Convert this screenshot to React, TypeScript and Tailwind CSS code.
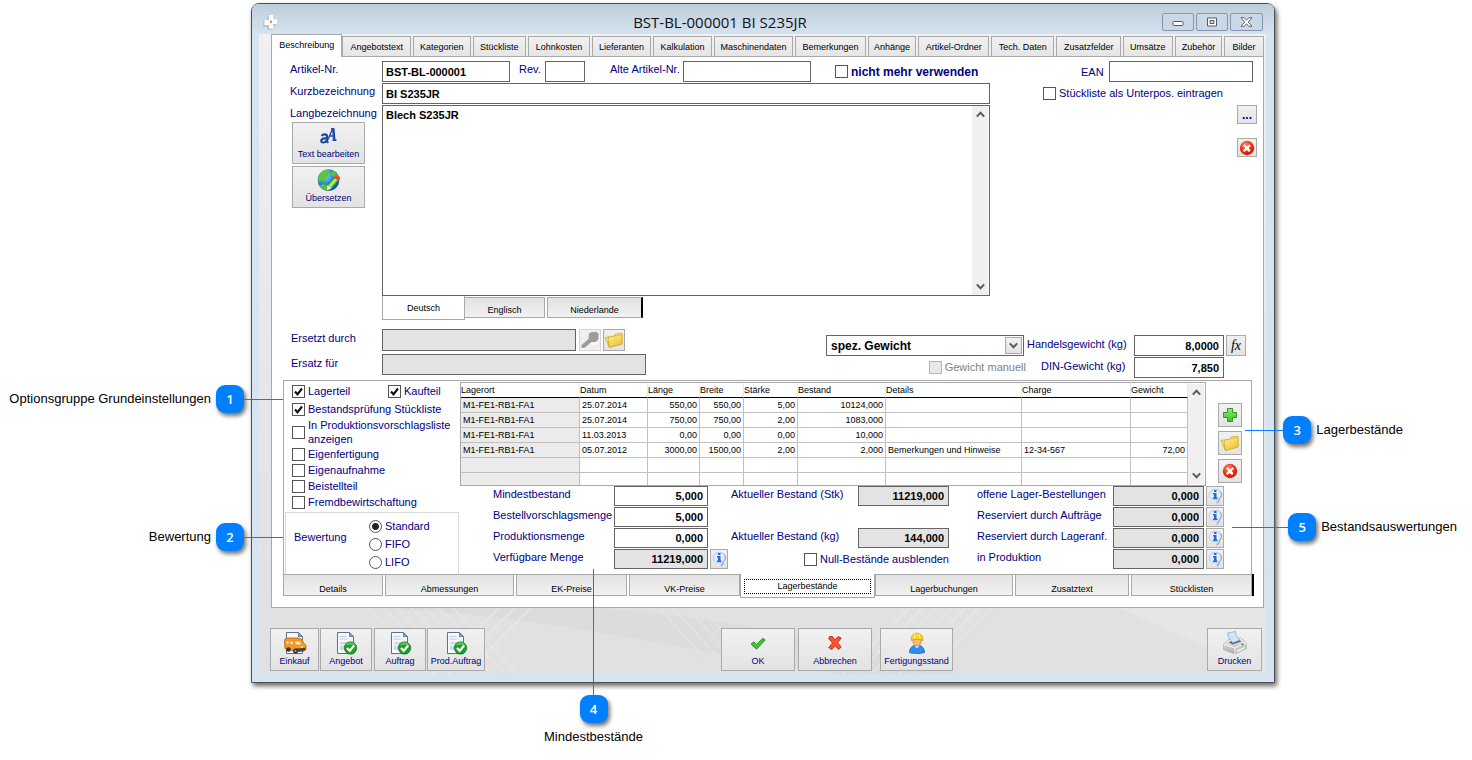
import type { ReactNode } from 'react';
import clsx from 'clsx';

const mainTabs = [
  { label: 'Beschreibung', width: 'w-[72px]' },
  { label: 'Angebotstext', width: 'w-[69px]' },
  { label: 'Kategorien', width: 'w-[58px]' },
  { label: 'Stückliste', width: 'w-[54px]' },
  { label: 'Lohnkosten', width: 'w-[62px]' },
  { label: 'Lieferanten', width: 'w-[60px]' },
  { label: 'Kalkulation', width: 'w-[59px]' },
  { label: 'Maschinendaten', width: 'w-[80px]' },
  { label: 'Bemerkungen', width: 'w-[71px]' },
  { label: 'Anhänge', width: 'w-[49px]' },
  { label: 'Artikel-Ordner', width: 'w-[71px]' },
  { label: 'Tech. Daten', width: 'w-[64px]' },
  { label: 'Zusatzfelder', width: 'w-[65px]' },
  { label: 'Umsätze', width: 'w-[50px]' },
  { label: 'Zubehör', width: 'w-[48px]' },
  { label: 'Bilder', width: 'w-[40px]' },
];

const detailTabs = [
  { label: 'Details', width: 'w-[100px]' },
  { label: 'Abmessungen', width: 'w-[129px]' },
  { label: 'EK-Preise', width: 'w-[111px]' },
  { label: 'VK-Preise', width: 'w-[111px]' },
  { label: 'Lagerbestände', width: 'w-[135px]' },
  { label: 'Lagerbuchungen', width: 'w-[138px]' },
  { label: 'Zusatztext', width: 'w-[114px]' },
  { label: 'Stücklisten', width: 'w-[121px]' },
];

const columns = [
  { label: 'Lagerort', width: 'w-[119px]' },
  { label: 'Datum', width: 'w-[68px]' },
  { label: 'Länge', width: 'w-[52px]', right: true },
  { label: 'Breite', width: 'w-[44px]', right: true },
  { label: 'Stärke', width: 'w-[54px]', right: true },
  { label: 'Bestand', width: 'w-[88px]', right: true },
  { label: 'Details', width: 'w-[136px]' },
  { label: 'Charge', width: 'w-[109px]' },
  { label: 'Gewicht', width: 'w-[57px]', right: true },
];

const stock = [
  ['M1-FE1-RB1-FA1', '25.07.2014', '550,00', '550,00', '5,00', '10124,000', '', '', ''],
  ['M1-FE1-RB1-FA1', '25.07.2014', '750,00', '750,00', '2,00', '1083,000', '', '', ''],
  ['M1-FE1-RB1-FA1', '11.03.2013', '0,00', '0,00', '0,00', '10,000', '', '', ''],
  ['M1-FE1-RB1-FA1', '05.07.2012', '3000,00', '1500,00', '2,00', '2,000', 'Bemerkungen und Hinweise', '12-34-567', '72,00'],
  ['', '', '', '', '', '', '', '', ''],
  ['', '', '', '', '', '', '', '', ''],
];

/* ---------- Icons ---------- */

const Chevron = ({ up = false }: { up?: boolean }) => (
  <svg width="9" height="7" viewBox="0 0 9 7" fill="none" stroke="#5a5a5a" strokeWidth="2">
    <path d={up ? 'M0.8 5.6 4.5 1.8 8.2 5.6' : 'M0.8 1.4 4.5 5.2 8.2 1.4'} />
  </svg>
);

const AppIcon = () => (
  <svg width="15" height="16" viewBox="0 0 15 16">
    <path d="M4 3h5v4h4v5H9v4H4v-3H0V7h4z" fill="#aebccb" opacity=".7" />
    <path d="M6 1h4v4.500h4V10h-4v4.500H6V11H1.500V6H6z" fill="#fff" />
    <circle cx="8" cy="7.800" r="1.200" fill="#f08030" />
  </svg>
);

const DeleteIcon = () => (
  <svg width="16" height="16" viewBox="0 0 16 16">
    <defs>
      <radialGradient id="delRed" cx=".4" cy=".3" r=".8">
        <stop offset="0" stopColor="#ff8a6c" />
        <stop offset=".5" stopColor="#ee3518" />
        <stop offset="1" stopColor="#b81400" />
      </radialGradient>
    </defs>
    <circle cx="8" cy="8" r="7.200" fill="url(#delRed)" />
    <path d="M5.300 4.200 8 6.400l2.700-2.200 1.200 1.500L9.700 8l1.800 2.500-1.500 1.400-2.400-2-2.300 2.200-1.400-1.500L6.300 8 4.200 5.600z" fill="#fff" />
  </svg>
);

const PlusIcon = () => (
  <svg width="16" height="16" viewBox="0 0 16 16">
    <defs>
      <linearGradient id="plusGreen" x2="0" y2="1">
        <stop offset="0" stopColor="#9be86f" />
        <stop offset="1" stopColor="#3cc02a" />
      </linearGradient>
    </defs>
    <path d="M5.500 1.500h5v4h4v5h-4v4h-5v-4h-4v-5h4z" fill="url(#plusGreen)" stroke="#2b9a22" />
  </svg>
);

const FolderIcon = () => (
  <svg width="20" height="18" viewBox="0 0 20 18">
    <defs>
      <linearGradient id="folderGold" x2=".6" y2="1">
        <stop offset="0" stopColor="#fff3a0" />
        <stop offset="1" stopColor="#f0c330" />
      </linearGradient>
    </defs>
    <path d="m1 6.500 3.500-.6 1 10.600z" fill="#ffe98a" stroke="#d2a520" strokeWidth=".8" />
    <path d="m4.500 6 6-1 .5-1.700 6.500-1.300.7.900V13L5.500 16.500 4 8.500z" fill="url(#folderGold)" stroke="#d0a11c" strokeWidth=".8" />
    <path d="m10.500 5 7-1.200" stroke="#d9b540" strokeWidth=".7" />
  </svg>
);

const InfoIcon = () => (
  <svg width="15" height="17" viewBox="0 0 15 17">
    <path d="M7.500 1.300c3.600 0 6.200 2.300 6.200 5.300 0 2-1 3.500-2.500 4.400.2 1.800-.3 3.300-2.400 4.600.5-1.300.4-2.400.1-3.700-4.500.6-7.600-2-7.600-5.300 0-3 2.600-5.300 6.200-5.300Z" fill="#e9ebfc" stroke="#bbbfe0" strokeWidth=".9" />
    <path d="M12 3.200c2.200 2.600 1.500 5.700-.9 7.600l-.1 1.700-1.500 2.300" fill="none" stroke="#8289c0" strokeWidth=".9" />
    <path d="M6 2h2.500v2H6zM5 5h3.500v4.500h1V11H5V9.500h1v-3H5z" fill="#1272d8" />
  </svg>
);

const KeyIcon = () => (
  <svg width="20" height="19" viewBox="0 0 20 19">
    <path d="m2.500 18.500 7-6.500 4 1.500L19 9V4" fill="none" stroke="#fff" strokeWidth="1.500" />
    <path d="M9 2.500 11.500 1h5L18.500 3v5.500L16 11h-4.500L4.500 17 2 17l-1-2.500 7.500-6.500z" fill="#9c9c9c" />
  </svg>
);

const FontIcon = () => (
  <svg width="17" height="18" viewBox="0 0 17 18" fill="none" stroke="#1c4aa6">
    <path d="M1.800 9c.8-2 5.200-2.300 5.200.6V14c0 1 .6 1.200 1.500 1M6.500 11.200C3 11.300 1 12 1.200 14c.3 2.300 4.300 1.800 5.300-.5" strokeWidth="2.200" />
    <path d="M8 12.500 12.500 2M11 1.700h3M9.500 9h5M12.500 13.300h4" strokeWidth="1.400" />
    <path d="m13.300 1.500 1 12" strokeWidth="2.600" />
  </svg>
);

const GlobeIcon = () => (
  <svg width="24" height="24" viewBox="0 0 24 24">
    <defs>
      <radialGradient id="sea" cx=".35" cy=".3" r=".8">
        <stop offset="0" stopColor="#8fd6ff" />
        <stop offset=".5" stopColor="#2682d8" />
        <stop offset="1" stopColor="#0c4596" />
      </radialGradient>
    </defs>
    <circle cx="11.500" cy="12" r="10.800" fill="url(#sea)" />
    <path d="M2.500 6.500C4.500 3.500 7.500 2 10.500 1.800l2.500 1.700-2 2.500 1 2-3 1.700-1.200 3.300-3.200-1L1.500 14C.9 11 1.300 8.500 2.500 6.500ZM15.500 2.500c3 1.300 5.300 4 6.300 7l-2 1.500-3.500-2-1.800-3zM5.500 16l4 1L11 20.500l-2 2C6 21.500 4 19.500 3 17.500z" fill="#5cc535" />
    <path d="m9.500 22.500.8-5.500L17.500 9l4.300 3L14.500 20.500z" fill="#5fcf3c" stroke="#237a18" strokeWidth=".8" />
    <path d="m12.800 18.500 6.700-8" stroke="#c8f5a5" strokeWidth="1.500" />
    <path d="m9.500 22.500.8-5.500 4.200 3.500z" fill="#e2f3ce" />
    <path d="m16.500 9.700 1.300-2c1.500-1.500 5.800.7 5.200 3l-1.500 2z" fill="#e84a32" />
  </svg>
);

const Page = () => (
  <>
    <path d="M3.500 1.500h12l4 4v17h-16z" fill="#f4f8fd" stroke="#5b7192" />
    <path d="M15.500 1.500v4h4z" fill="#7ba3d4" stroke="#5b7192" strokeWidth=".8" />
  </>
);

const DocumentOkIcon = () => (
  <svg width="24" height="24" viewBox="0 0 24 24">
    <Page />
    <path d="M5.500 5.500h7M5.500 8h8" stroke="#c3cbe0" strokeWidth="1.200" />
    <path d="M6 11h11v8H6z" fill="#cfd6e6" />
    <path d="M6 14h8" stroke="#fff" />
    <circle cx="16.500" cy="17" r="6.200" fill="#18a127" stroke="#0c7718" strokeWidth=".7" />
    <path d="M11.500 14.500a5.500 5.500 0 0 1 10 0c-3-1.200-7-1-10 0Z" fill="#76d66b" opacity=".7" />
    <path d="m13 17 2.700 2.800 4.500-5.300" fill="none" stroke="#fff" strokeWidth="2.300" />
  </svg>
);

const VanIcon = () => (
  <svg width="24" height="24" viewBox="0 0 24 24">
    <Page />
    <path d="M1.500 9C2 7.500 3.500 7 5.500 7H14c4 0 5.500 1.500 6.500 5l2.500 2.200v4.300l-2 1.500-8 .5L2 17.500z" fill="#f89a1c" stroke="#bd5c06" strokeWidth=".8" />
    <path d="M3 10h3v3.300l-3-.3zM7 10h3.200v3.700L7 13.400zM11.500 10h4.300c1.500.4 2.400 1.800 2.900 3.800l-6.200.3z" fill="#fce5b4" stroke="#c87a1e" strokeWidth=".5" />
    <path d="m13 17.500 9.500-.8v2l-2 1.500-7.500.6z" fill="#4c4640" />
    <circle cx="5.500" cy="18.500" r="2.300" fill="#333" />
    <circle cx="12.500" cy="20" r="2.500" fill="#333" />
    <circle cx="12.500" cy="20" r="1" fill="#aaa" />
    <circle cx="19" cy="16" r="1" fill="#fff4bd" />
  </svg>
);

const CheckIcon = () => (
  <svg width="16" height="16" viewBox="0 0 16 16">
    <path d="M1 9.200 3.600 6.800l2.800 2.600 6.400-6.200 2.400 1.800-8.600 9.200z" fill="#3fc631" stroke="#258d1d" strokeWidth=".9" />
  </svg>
);

const CrossIcon = () => (
  <svg width="16" height="16" viewBox="0 0 16 16">
    <path d="M2.500 1.500h3L8 4.800l3.200-3.300 3 1.500-3.500 4.700 3.500 4.500-2.700 2.300L8 10.800l-3 3.700-3.300-1.800L5.500 8 1.700 3.700z" fill="#fa5330" stroke="#c22a12" strokeWidth=".9" />
  </svg>
);

const WorkerIcon = () => (
  <svg width="18" height="22" viewBox="0 0 18 22">
    <path d="M1.500 20.500c0-4 2-6.500 5-7h5c3 .5 5 3 5 7-3 1.300-12 1.300-15 0Z" fill="#318de8" stroke="#1261b5" strokeWidth=".7" />
    <path d="m6.300 13.500 2.700 3 2.700-3z" fill="#d9efff" />
    <ellipse cx="9" cy="9" rx="4.200" ry="5" fill="#f5b878" stroke="#b97938" strokeWidth=".6" />
    <path d="M3.200 8.500C3 4 5 1.200 9 1.200S15.200 4 15 8.500C11.500 6.800 7 6.800 3.200 8.500Z" fill="#ffd428" stroke="#c79405" strokeWidth=".7" />
    <path d="M7 1.800c-.6 1.500-.7 3.200-.5 5M11 1.800c.5 1.500.6 3.200.5 5" fill="none" stroke="#fff09a" strokeWidth=".9" />
  </svg>
);

const PrinterIcon = () => (
  <svg width="26" height="26" viewBox="0 0 26 26">
    <defs>
      <linearGradient id="printerBody" x2="0" y2="1">
        <stop offset="0" stopColor="#f5f5f5" />
        <stop offset="1" stopColor="#a8a8a8" />
      </linearGradient>
    </defs>
    <path d="m1.500 14 5-4.500 12-1.500 6 4.500v6L13 24 1.500 19.500z" fill="url(#printerBody)" stroke="#a5a5a5" strokeWidth=".6" />
    <path d="M1.500 14 13 18l11.500-5.500M13 18v6" fill="none" stroke="#fff" strokeWidth=".9" />
    <path d="m6.500 12 10.500-2.500 2.500 2-9 3z" fill="#666" />
    <path d="m5.500 3 8-1.500c-.2 3 1.500 6.500 4.500 8.500l-7 2.700C8.200 10.500 6 7 5.500 3Z" fill="#cde6fb" stroke="#7aa7d0" strokeWidth=".7" />
    <path d="m14 20 8-3.500 2.500 1.500-9.500 5z" fill="#eee" stroke="#aaa" strokeWidth=".5" />
    <circle cx="20.500" cy="14.500" r="1.300" fill="#35c928" />
  </svg>
);

/* ---------- Controls ---------- */

const buttonLook = 'border border-[#a9a9a9] bg-linear-to-b from-[#f1f1f1] to-[#e3e3e3]';

const IconButton = ({ label, size, disabled, children }: { label: string; size: string; disabled?: boolean; children: ReactNode }) => (
  <button
    type="button"
    aria-label={label}
    disabled={disabled}
    className={clsx('flex shrink-0 items-center justify-center', size, disabled ? 'border border-[#d4d4d4] bg-[#efefef]' : buttonLook)}
  >
    {children}
  </button>
);

const ToolButton = ({ label, size, icon }: { label: string; size: string; icon: ReactNode }) => (
  <button type="button" className={clsx('flex shrink-0 flex-col items-center justify-end whitespace-nowrap text-[9px] leading-[11px] text-[#000080]', size, buttonLook)}>
    <span className="flex h-6 items-center">{icon}</span>
    <span className="mt-px mb-[3px]">{label}</span>
  </button>
);

const TextField = ({ id, label, value = '', className, readOnly }: { id?: string; label?: string; value?: string; className: string; readOnly?: boolean }) => (
  <input
    id={id}
    aria-label={label}
    type="text"
    defaultValue={value}
    readOnly={readOnly}
    className={clsx('shrink-0 border border-[#646464] pr-1 pl-[3px] text-[11px] font-bold text-black outline-none', readOnly ? 'bg-[#e3e3e3]' : 'bg-white', className)}
  />
);

const Check = ({ label, checked, disabled, className, bold }: { label: string; checked?: boolean; disabled?: boolean; className?: string; bold?: boolean }) => (
  <label className={clsx('flex items-center gap-[3px]', bold ? 'text-[12px] font-bold' : 'text-[11px]', disabled ? 'text-[#808080]' : 'text-[#000080]', className)}>
    <span className="relative size-[13px] shrink-0">
      <input
        type="checkbox"
        defaultChecked={checked}
        disabled={disabled}
        className={clsx('peer block size-[13px] appearance-none border', disabled ? 'border-[#b5b5b5] bg-[#e8e8e8]' : 'border-[#555] bg-white')}
      />
      <svg className="pointer-events-none absolute inset-0 hidden peer-checked:block" width="13" height="13" viewBox="0 0 13 13">
        <path d="m3 6.500 2.500 2.800L10 3.500" fill="none" stroke="#111" strokeWidth="2.200" />
      </svg>
    </span>
    <span>{label}</span>
  </label>
);

const Radio = ({ label, checked }: { label: string; checked?: boolean }) => (
  <label className="flex h-[18px] items-center gap-[3px] text-[11px] text-[#000080]">
    <input
      type="radio"
      name="bewertung"
      defaultChecked={checked}
      className="size-[13px] appearance-none rounded-full border border-[#555] bg-white checked:bg-[radial-gradient(circle,#222_0_3px,#fff_4px)]"
    />
    {label}
  </label>
);

const ValueRow = ({ id, label, value, labelWidth, inputWidth, readOnly, info }: { id: string; label: string; value: string; labelWidth: string; inputWidth: string; readOnly?: boolean; info?: string }) => (
  <div className="flex h-5">
    <label htmlFor={id} className={clsx('shrink-0 text-[11px] leading-4 whitespace-nowrap text-[#000080]', labelWidth)}>
      {label}
    </label>
    <TextField id={id} value={value} readOnly={readOnly} className={clsx('h-5 text-right', inputWidth)} />
    {info && (
      <span className="ml-0.5">
        <IconButton label={info} size="h-5 w-[18px]">
          <InfoIcon />
        </IconButton>
      </span>
    )}
  </div>
);

const ScrollBar = () => (
  <div className="flex w-4 shrink-0 flex-col items-center justify-between bg-[#f0f0f0] py-[5px]">
    <Chevron up />
    <Chevron />
  </div>
);

/* ---------- Page parts ---------- */

const TitleBar = () => (
  <header className="flex h-[30px] items-center rounded-t-md bg-linear-to-b from-[#bfcddb] to-[#d5e3f1] pr-[11px] pl-[11px]">
    <span className="pt-1.5"><AppIcon /></span>
    <h1 className="flex-1 pt-1.5 text-center font-['Open_Sans'] text-[15px] leading-5 text-[#111]">BST-BL-000001 BI S235JR</h1>
    <div className="flex gap-0.5 pt-1.5">
      <button type="button" aria-label="Minimieren" className="flex h-[18px] w-8 items-center justify-center rounded-[2px] border border-[#8495b3] bg-[#c9d7e6]">
        <svg width="12" height="10" viewBox="0 0 12 10"><rect x="1" y="4.500" width="10" height="4" rx="1" fill="#fff" stroke="#555b66" /></svg>
      </button>
      <button type="button" aria-label="Wiederherstellen" className="flex h-[18px] w-8 items-center justify-center rounded-[2px] border border-[#8495b3] bg-[#c9d7e6]">
        <svg width="12" height="10" viewBox="0 0 12 10"><path d="M1.500 1h9v8h-9z" fill="#fff" stroke="#555b66" /><path d="M4 3.500h4v3H4z" fill="#c9d7e6" stroke="#555b66" /></svg>
      </button>
      <button type="button" aria-label="Schließen" className="flex h-[18px] w-[33px] items-center justify-center rounded-[2px] border border-[#8495b3] bg-[#c9d7e6]">
        <svg width="13" height="10" viewBox="0 0 13 10"><path d="M1 .7h3.200l2.300 2.500L8.800.7H12L8.300 5l3.700 4.300H8.800L6.500 6.800 4.200 9.300H1L4.700 5z" fill="#fff" stroke="#555b66" strokeWidth=".9" /></svg>
      </button>
    </div>
  </header>
);

const MainTabs = () => (
  <div role="tablist" className="relative -mb-px flex items-start text-[9px] text-black">
    {mainTabs.map((tab, i) => (
      <button
        key={tab.label}
        type="button"
        role="tab"
        aria-selected={i === 0}
        className={clsx(
          'min-w-0 grow whitespace-nowrap border border-[#a9a9a9]',
          tab.width,
          i === 0 ? 'h-[23px] border-b-0 bg-white' : 'mt-0.5 h-[21px] bg-linear-to-b from-[#f1f1f1] to-[#e5e5e5] pt-0.5',
          i > 1 && 'ml-0.5'
        )}
      >
        {tab.label}
      </button>
    ))}
  </div>
);

const ArticleForm = () => (
  <>
    <div className="mt-1 flex pr-[10px] pl-[18px] text-[11px] leading-4 text-[#000080]">
      <label htmlFor="artikel" className="w-[92px]">Artikel-Nr.</label>
      <TextField id="artikel" value="BST-BL-000001" className="h-[21px] w-32" />
      <label htmlFor="rev" className="ml-[9px] w-[26px]">Rev.</label>
      <TextField id="rev" className="h-[21px] w-10" />
      <label htmlFor="alt" className="ml-[25px] w-[73px] whitespace-nowrap">Alte Artikel-Nr.</label>
      <TextField id="alt" className="h-[21px] w-32" />
      <Check label="nicht mehr verwenden" bold className="ml-6" />
      <label htmlFor="ean" className="ml-auto w-7 self-center">EAN</label>
      <TextField id="ean" className="h-[21px] w-36" />
    </div>

    <div className="mt-px flex">
      <div className="flex-1">
        <div className="flex pl-[18px]">
          <label htmlFor="kurz" className="w-[92px] text-[11px] leading-4 text-[#000080]">Kurzbezeichnung</label>
          <div className="flex flex-1">
            <TextField id="kurz" value="BI S235JR" className="h-[21px] flex-1" />
          </div>
        </div>
        <div className="mt-px flex pl-[18px]">
          <div className="w-[92px] text-[11px] leading-4 text-[#000080]">
            <label htmlFor="lang">Langbezeichnung</label>
            <div className="mt-px ml-0.5 flex flex-col gap-0.5">
              <ToolButton label="Text bearbeiten" size="h-[42px] w-[73px]" icon={<FontIcon />} />
              <ToolButton label="Übersetzen" size="h-[42px] w-[73px]" icon={<GlobeIcon />} />
            </div>
          </div>
          <div className="flex-1">
            <div className="flex h-[191px] border border-[#646464] bg-white pr-px">
              <textarea id="lang" defaultValue="Blech S235JR" className="flex-1 resize-none overflow-hidden px-[3px] py-0.5 text-[11px] leading-[14px] font-bold text-black outline-none" />
              <ScrollBar />
            </div>
            <div role="tablist" className="flex items-start text-[9px] text-black">
              <button type="button" role="tab" aria-selected className="h-6 w-[83px] border border-t-0 border-[#a9a9a9] bg-white pt-0.5">Deutsch</button>
              <button type="button" role="tab" aria-selected={false} className="mt-px h-[21px] w-20 border border-l-0 border-[#a9a9a9] bg-linear-to-b from-[#e3e3e3] to-[#f1f1f1] pt-1.5">Englisch</button>
              <button type="button" role="tab" aria-selected={false} className="mt-px ml-0.5 h-[21px] w-24 border border-r-2 border-[#a9a9a9] border-r-black bg-linear-to-b from-[#e3e3e3] to-[#f1f1f1] pt-1.5">Niederlande</button>
            </div>
          </div>
        </div>
      </div>

      <div className="w-[273px] shrink-0 pr-[6px]">
        <Check label="Stückliste als Unterpos. eintragen" className="ml-[53px] h-[21px]" />
        <div className="mt-px flex flex-col items-end gap-3.5">
          <button type="button" className={clsx('h-[19px] w-5 text-[12px] leading-4 font-bold text-[#000080]', buttonLook)}>...</button>
          <IconButton label="Artikel löschen" size="h-[19px] w-5">
            <DeleteIcon />
          </IconButton>
        </div>
      </div>
    </div>

    <div className="mt-[9px] flex justify-between pr-[17px] pl-[19px] text-[11px] text-[#000080]">
      <div className="flex flex-col gap-[3px]">
        <div className="flex">
          <label htmlFor="ersetzt" className="w-[91px] leading-[18px]">Ersetzt durch</label>
          <TextField id="ersetzt" readOnly className="h-[22px] w-[194px]" />
          <div className="ml-[3px] flex gap-0.5">
            <IconButton label="Auswählen" size="size-[22px]" disabled><KeyIcon /></IconButton>
            <IconButton label="Ordner öffnen" size="size-[22px]"><FolderIcon /></IconButton>
          </div>
        </div>
        <div className="flex">
          <label htmlFor="ersatz" className="w-[91px] leading-[18px]">Ersatz für</label>
          <TextField id="ersatz" readOnly className="h-[21px] w-[264px]" />
        </div>
      </div>

      <div className="mt-1.5 flex flex-col gap-px">
        <div className="flex">
          <div className="relative w-[198px]">
            <select aria-label="Gewichtsart" className="h-[21px] w-full appearance-none border border-[#646464] bg-white px-1 text-[12px] font-bold text-black">
              <option>spez. Gewicht</option>
            </select>
            <span className={clsx('pointer-events-none absolute top-0.5 right-0.5 flex h-[17px] w-[17px] items-center justify-center', buttonLook)}>
              <Chevron />
            </span>
          </div>
          <label htmlFor="handel" className="ml-[3px] w-[107px] leading-[18px]">Handelsgewicht (kg)</label>
          <TextField id="handel" value="8,0000" className="h-[21px] w-[90px] text-right" />
          <button type="button" aria-label="Formel" className={clsx("ml-0.5 h-[21px] w-5 font-['Liberation_Serif'] text-[14px] leading-4 text-black italic", buttonLook)}>fx</button>
        </div>
        <div className="flex justify-end pr-[22px]">
          <Check label="Gewicht manuell" disabled className="mr-[15px]" />
          <label htmlFor="din" className="w-[93px] leading-[18px]">DIN-Gewicht (kg)</label>
          <TextField id="din" value="7,850" className="h-[21px] w-[90px] text-right" />
        </div>
      </div>
    </div>
  </>
);

const StockTable = () => (
  <div className="flex h-[104px] min-w-0 flex-1 overflow-hidden border border-[#a9a9a9]">
    <div className="min-w-0 flex-1">
      <table className="w-full table-fixed border-separate border-spacing-0 text-[9px] leading-[14px] text-black">
        <thead>
          <tr>
            {columns.map((c) => (
              <th key={c.label} scope="col" className={clsx('h-[15px] border-r border-b border-r-[#e4eaf2] border-b-black p-0 text-left font-normal', c.width)}>
                {c.label}
              </th>
            ))}
          </tr>
        </thead>
        <tbody>
          {stock.map((row, r) => (
            <tr key={r}>
              {row.map((cell, i) => (
                <td key={columns[i].label} className={clsx('h-[15px] border-r border-b border-[#c0c0c0] px-0.5 py-0 whitespace-nowrap', i === 0 && 'bg-[#ebebeb]', columns[i].right && 'text-right')}>
                  {cell}
                </td>
              ))}
            </tr>
          ))}
        </tbody>
      </table>
    </div>
    <div className="flex py-px pr-px">
      <ScrollBar />
    </div>
  </div>
);

const StockPanel = () => (
  <section className="mx-[11px] mt-0.5">
    <div className="flex border border-[#a9a9a9] pt-px">
      <div className="w-44 shrink-0">
        <div className="pl-2">
          <div className="flex h-[18px]">
            <Check label="Lagerteil" checked className="w-24" />
            <Check label="Kaufteil" checked />
          </div>
          <Check label="Bestandsprüfung Stückliste" checked className="h-[18px]" />
          <Check label="In Produktionsvorschlagsliste anzeigen" className="h-7 leading-[14px]" />
          <Check label="Eigenfertigung" className="h-4" />
          <Check label="Eigenaufnahme" className="h-4" />
          <Check label="Beistellteil" className="h-4" />
          <Check label="Fremdbewirtschaftung" className="h-4" />
        </div>
        <fieldset aria-label="Bewertung" className="mt-0.5 ml-px flex h-[62px] w-[174px] border border-b-0 border-[#d9d9d9] pt-1 pl-2 text-[11px] text-[#000080]">
          <span className="w-[75px] pt-3">Bewertung</span>
          <div>
            <Radio label="Standard" checked />
            <Radio label="FIFO" />
            <Radio label="LIFO" />
          </div>
        </fieldset>
      </div>

      <div className="min-w-0 flex-1">
        <div className="flex">
          <StockTable />
          <div className="flex w-[45px] shrink-0 flex-col gap-1 pt-[21px] pl-3">
            <IconButton label="Lagerbestand hinzufügen" size="size-6"><PlusIcon /></IconButton>
            <IconButton label="Lagerbestand öffnen" size="size-6"><FolderIcon /></IconButton>
            <IconButton label="Lagerbestand löschen" size="size-6"><DeleteIcon /></IconButton>
          </div>
        </div>

        <div className="flex pr-[27px] pl-[33px]">
          <div className="flex flex-col gap-px">
            <ValueRow id="mindest" label="Mindestbestand" value="5,000" labelWidth="w-[121px]" inputWidth="w-[94px]" />
            <ValueRow id="bestell" label="Bestellvorschlagsmenge" value="5,000" labelWidth="w-[121px]" inputWidth="w-[94px]" />
            <ValueRow id="produktion" label="Produktionsmenge" value="0,000" labelWidth="w-[121px]" inputWidth="w-[94px]" />
            <ValueRow id="verfuegbar" label="Verfügbare Menge" value="11219,000" labelWidth="w-[121px]" inputWidth="w-[94px]" readOnly info="Info Verfügbare Menge" />
          </div>
          <div className="ml-[3px] grid grid-rows-[repeat(4,20px)] gap-px">
            <ValueRow id="stk" label="Aktueller Bestand (Stk)" value="11219,000" labelWidth="w-[127px]" inputWidth="w-[91px]" readOnly />
            <div className="row-start-3">
              <ValueRow id="kg" label="Aktueller Bestand (kg)" value="144,000" labelWidth="w-[127px]" inputWidth="w-[91px]" readOnly />
            </div>
            <Check label="Null-Bestände ausblenden" className="row-start-4 justify-self-end" />
          </div>
          <div className="ml-auto flex flex-col gap-px">
            <ValueRow id="offen" label="offene Lager-Bestellungen" value="0,000" labelWidth="w-[136px]" inputWidth="w-[91px]" readOnly info="Info Bestellungen" />
            <ValueRow id="auftraege" label="Reserviert durch Aufträge" value="0,000" labelWidth="w-[136px]" inputWidth="w-[91px]" readOnly info="Info Aufträge" />
            <ValueRow id="lageranf" label="Reserviert durch Lageranf." value="0,000" labelWidth="w-[136px]" inputWidth="w-[91px]" readOnly info="Info Lageranforderungen" />
            <ValueRow id="inprod" label="in Produktion" value="0,000" labelWidth="w-[136px]" inputWidth="w-[91px]" readOnly info="Info Produktion" />
          </div>
        </div>
      </div>
    </div>

    <div role="tablist" className="relative -mt-px -mr-0.5 flex items-start text-[9px] text-black">
      {detailTabs.map((tab, i) => (
        <button
          key={tab.label}
          type="button"
          role="tab"
          aria-selected={i === 4}
          className={clsx(
            'grow border border-[#a9a9a9]',
            tab.width,
            i === 4 ? 'h-6 border-t-0 bg-white px-[3px] pt-0.5' : 'h-[22px] bg-linear-to-b from-[#e3e3e3] to-[#f1f1f1] pt-2',
            i > 0 && i !== 4 && i !== 5 && 'ml-0.5'
          )}
        >
          {i === 4 ? <span className="block border border-dotted border-black leading-[13px]">{tab.label}</span> : tab.label}
        </button>
      ))}
      <span className="h-[22px] w-0.5 bg-black" />
    </div>
  </section>
);

const BottomBar = () => (
  <footer className="relative">
    <svg aria-hidden className="absolute top-0 -left-3 h-full w-[calc(100%+14px)]" viewBox="0 0 1007 66" preserveAspectRatio="none" fill="none">
      <path d="M0 0h1007v66H0z" fill="#e1e1e1" />
      <path d="M110 0c160 4 300 40 470 66h120C560 30 430 4 330 0z" fill="#dcdcdc" />
      <path d="M860 0 1007 66V0z" fill="#e6e6e6" />
      <path d="m110 0 66 66M124 0l66 66M138 0l66 66M152 0l66 66M166 0l66 66M180 0l66 66M194 0l66 66" stroke="#ececec" />
      <path d="M240 0 174 66M256 0 190 66M272 0 206 66M650 0 584 66M664 0 598 66M678 0 612 66M692 0 626 66M706 0 640 66M720 0 654 66M734 0 668 66" stroke="#ededed" />
      <path d="m400 0 60 66M414 0l60 66M428 0l60 66M442 0l60 66" stroke="#e9e9e9" />
    </svg>
    <div className="relative flex pt-5 pr-0.5 pb-[3px]">
      <div className="-ml-px flex gap-px">
        <ToolButton label="Einkauf" size="h-[43px] w-[49px]" icon={<VanIcon />} />
        <ToolButton label="Angebot" size="h-[43px] w-[52px]" icon={<DocumentOkIcon />} />
        <ToolButton label="Auftrag" size="ml-px h-[43px] w-[52px]" icon={<DocumentOkIcon />} />
        <ToolButton label="Prod.Auftrag" size="h-[43px] w-[58px]" icon={<DocumentOkIcon />} />
      </div>
      <div className="grow-[236]" />
      <div className="flex gap-[3px]">
        <ToolButton label="OK" size="h-[43px] w-[74px]" icon={<CheckIcon />} />
        <ToolButton label="Abbrechen" size="h-[43px] w-[74px]" icon={<CrossIcon />} />
        <ToolButton label="Fertigungsstand" size="ml-[5px] h-[43px] w-[73px]" icon={<WorkerIcon />} />
      </div>
      <div className="grow-[254]" />
      <ToolButton label="Drucken" size="h-[43px] w-[55px]" icon={<PrinterIcon />} />
    </div>
  </footer>
);

const Badge = ({ n }: { n: number }) => (
  <span className="flex size-7 shrink-0 items-center justify-center rounded-[9px] bg-[#0080ff] font-['Open_Sans'] text-[13px] font-semibold text-white shadow-[2px_3px_4px_rgba(0,0,0,0.55)]">{n}</span>
);

const Callouts = () => (
  <div className="text-[13px] leading-4 whitespace-nowrap text-black">
    <div className="absolute top-[385px] left-0 flex w-[283px] items-center justify-end">
      <span className="mr-[5px]">Optionsgruppe Grundeinstellungen</span>
      <Badge n={1} />
      <span className="h-px w-[39px] bg-[#0080ff]" />
    </div>
    <div className="absolute top-[523px] left-0 flex w-[283px] items-center justify-end">
      <span className="mr-[5px]">Bewertung</span>
      <Badge n={2} />
      <span className="h-px w-[39px] bg-[#0080ff]" />
    </div>
    <div className="absolute top-[416px] right-[69px] flex items-center">
      <span className="h-px w-[38px] bg-[#0080ff]" />
      <Badge n={3} />
      <span className="ml-[5px]">Lagerbestände</span>
    </div>
    <div className="absolute top-[513px] right-[15px] flex items-center">
      <span className="h-px w-14 bg-[#0080ff]" />
      <Badge n={5} />
      <span className="ml-[5px]">Bestandsauswertungen</span>
    </div>
    <div className="absolute top-[569px] left-[544px] flex flex-col items-center">
      <span className="h-[126px] w-px bg-[#0080ff]" />
      <Badge n={4} />
      <span className="mt-1.5">Mindestbestände</span>
    </div>
  </div>
);

export default function App() {
  return (
    <div className="relative min-h-screen bg-white pt-[3px] font-['Liberation_Sans',Arial,sans-serif]">
      <main className="mr-[197px] ml-[251px] rounded-t-lg border border-[#4c4f54] bg-[#d6e4f1] shadow-[2px_3px_5px_rgba(0,0,0,0.6)]">
        <TitleBar />
        <div className="mr-2 mb-2 ml-[7px] bg-linear-to-b from-[#f0f0f0] to-[#dfdfdf] pr-0.5 pl-3">
          <MainTabs />
          <div className="border border-[#a9a9a9] bg-white pb-[9px]">
            <ArticleForm />
            <StockPanel />
          </div>
          <BottomBar />
        </div>
      </main>
      <Callouts />
    </div>
  );
}
